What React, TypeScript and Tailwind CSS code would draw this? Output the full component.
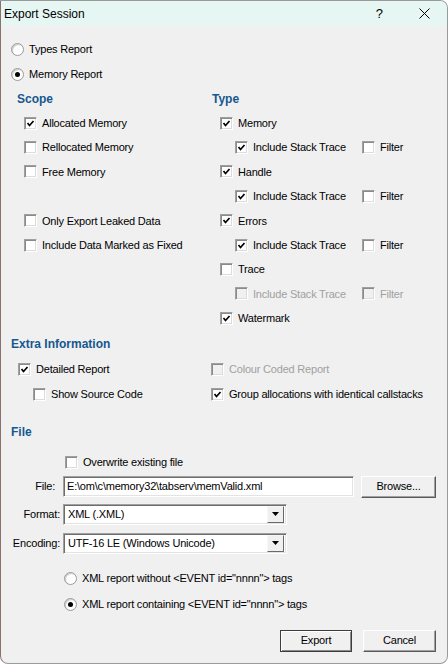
import React from 'react';

const font = "font-['Liberation_Sans',Arial,sans-serif] text-[11px] tracking-[-0.2px] text-black";

const Box: React.FC<{ checked?: boolean; disabled?: boolean }> = ({ checked, disabled }) => (
  <span
    className={`relative flex h-[13px] w-[13px] shrink-0 items-center justify-center border border-t-[#a0a0a0] border-l-[#a0a0a0] border-b-white border-r-white shadow-[inset_1px_1px_0_#8a8a8a,inset_-1px_-1px_0_#dcdcdc] ${
      disabled ? 'bg-[#f0f0f0]' : 'bg-white'
    }`}
  >
    {checked && (
      <svg width="9" height="9" viewBox="0 0 9 9">
        <polyline points="1.5,4 3.5,6.5 7.5,2" fill="none" stroke="#000" strokeWidth="1.7" />
      </svg>
    )}
  </span>
);

const Check: React.FC<{ label: string; checked?: boolean; disabled?: boolean; className?: string }> = ({
  label,
  checked,
  disabled,
  className = '',
}) => (
  <div className={`flex items-center gap-[5px] ${className}`}>
    <Box checked={checked} disabled={disabled} />
    <span className={`whitespace-nowrap ${disabled ? 'text-[#a0a0a0]' : 'text-black'}`}>{label}</span>
  </div>
);

const Radio: React.FC<{ label: string; on?: boolean }> = ({ label, on }) => (
  <div className="flex items-center gap-[5px]">
    <span className="flex h-[13px] w-[13px] items-center justify-center rounded-full border border-[#9a9a9a] bg-white shadow-[inset_1px_1px_1px_#c8c8c8]">
      {on && <span className="h-[5px] w-[5px] rounded-full bg-black" />}
    </span>
    <span className="whitespace-nowrap">{label}</span>
  </div>
);

const Heading: React.FC<{ children: React.ReactNode; className?: string }> = ({ children, className = '' }) => (
  <div className={`flex items-center text-[12px] font-bold tracking-normal text-[#15588f] ${className}`}>{children}</div>
);

const Row: React.FC<{ children?: React.ReactNode; className?: string }> = ({ children, className = '' }) => (
  <div className={`flex h-[24.4px] items-center ${className}`}>{children}</div>
);

const TraceRow: React.FC<{ disabled?: boolean; checked?: boolean }> = ({ disabled, checked }) => (
  <Row className="pl-[15px]">
    <Check label="Include Stack Trace" checked={checked} disabled={disabled} className="w-[127px]" />
    <Check label="Filter" disabled={disabled} />
  </Row>
);

const Sunken: React.FC<{ children: React.ReactNode; className?: string }> = ({ children, className = '' }) => (
  <div
    className={`flex items-center border border-t-[#a0a0a0] border-l-[#a0a0a0] border-b-white border-r-white bg-white shadow-[inset_1px_1px_0_#6e6e6e,inset_-1px_-1px_0_#e3e3e3] ${className}`}
  >
    {children}
  </div>
);

const Select: React.FC<{ value: string }> = ({ value }) => (
  <Sunken className="h-[21px] w-[224px] justify-between pl-[4px] pr-[2px]">
    <span className="whitespace-nowrap">{value}</span>
    <span className="flex h-[17px] w-[17px] items-center justify-center border border-t-[#f7f7f7] border-l-[#f7f7f7] border-b-[#6a6a6a] border-r-[#6a6a6a] bg-[#f0f0f0]">
      <svg width="7" height="4" viewBox="0 0 7 4">
        <polygon points="0,0 7,0 3.5,4" fill="#000" />
      </svg>
    </span>
  </Sunken>
);

const Button: React.FC<{ label: string; def?: boolean; className?: string }> = ({ label, def, className = '' }) => (
  <div
    className={`flex h-[22px] items-center justify-center border bg-[#f0f0f0] ${
      def
        ? 'border-[#3c3c3c] shadow-[inset_1px_1px_0_#fff,inset_-1px_-1px_0_#8a8a8a]'
        : 'border-t-white border-l-white border-b-[#5a5a5a] border-r-[#5a5a5a] shadow-[inset_-1px_-1px_0_#a0a0a0]'
    } ${className}`}
  >
    {label}
  </div>
);

export default function App() {
  return (
    <div
      className={`${font} flex h-[664px] w-[448px] flex-col overflow-hidden rounded-tr-[8px] rounded-br-[8px] rounded-bl-[8px] border border-[#9a9a9a] border-l-[#8c7070] bg-[#f0f0f0]`}
    >
      <div className="flex h-[25px] shrink-0 items-center bg-[#e6f6f2] pl-[3px] text-[12px] tracking-normal">
        <span className="flex-1">Export Session</span>
        <span className="mr-[36px] text-[13px]">?</span>
        <svg className="mr-[17px]" width="11" height="11" viewBox="0 0 11 11">
          <path d="M0.5 0.5 L10.5 10.5 M10.5 0.5 L0.5 10.5" stroke="#000" strokeWidth="1" />
        </svg>
      </div>

      <div className="flex flex-col pt-[11px]">
        <div className="pl-[10px]">
          <div className="flex h-[25px] items-center">
            <Radio label="Types Report" />
          </div>
          <div className="flex h-[25px] items-center">
            <Radio label="Memory Report" on />
          </div>
        </div>

        <div className="flex">
          <div className="w-[211px] shrink-0 pl-[16px]">
            <Heading className="h-[24px]">Scope</Heading>
            <div className="pl-[7px]">
              <Row><Check label="Allocated Memory" checked /></Row>
              <Row><Check label="Rellocated Memory" /></Row>
              <Row><Check label="Free Memory" /></Row>
              <Row />
              <Row><Check label="Only Export Leaked Data" /></Row>
              <Row><Check label="Include Data Marked as Fixed" /></Row>
            </div>
          </div>
          <div className="flex-1">
            <Heading className="h-[24px]">Type</Heading>
            <div className="pl-[8px]">
              <Row><Check label="Memory" checked /></Row>
              <TraceRow checked />
              <Row><Check label="Handle" checked /></Row>
              <TraceRow checked />
              <Row><Check label="Errors" checked /></Row>
              <TraceRow checked />
              <Row><Check label="Trace" /></Row>
              <TraceRow disabled />
              <Row><Check label="Watermark" checked /></Row>
            </div>
          </div>
        </div>

        <div className="pl-[10px]">
          <Heading className="h-[26px]">Extra Information</Heading>
          <div className="flex h-[25px] items-center">
            <Check label="Detailed Report" checked className="w-[200px] shrink-0 pl-[7px]" />
            <Check label="Colour Coded Report" disabled />
          </div>
          <div className="flex h-[25px] items-center">
            <Check label="Show Source Code" className="w-[200px] shrink-0 pl-[22px]" />
            <Check label="Group allocations with identical callstacks" checked />
          </div>
          <Heading className="mt-[13px] h-[24px]">File</Heading>
        </div>

        <div className="mt-[7px] flex h-[24px] items-center pl-[64px]">
          <Check label="Overwrite existing file" />
        </div>

        <div className="mt-[1px] flex items-start">
          <div className="flex h-[21px] w-[62px] items-center justify-end pr-[8px]">File:</div>
          <Sunken className="h-[21px] w-[291px] pl-[3px]">
            <span className="whitespace-nowrap">E:\om\c\memory32\tabserv\memValid.xml</span>
          </Sunken>
          <Button label="Browse..." className="ml-[7px] w-[75px]" />
        </div>

        <div className="mt-[6px] flex items-center">
          <div className="w-[62px] pr-[3px] text-right">Format:</div>
          <Select value="XML (.XML)" />
        </div>

        <div className="mt-[8px] flex items-center">
          <div className="w-[62px] pr-[3px] text-right">Encoding:</div>
          <Select value="UTF-16 LE (Windows Unicode)" />
        </div>

        <div className="mt-[12px] pl-[63px]">
          <div className="flex h-[26px] items-center">
            <Radio label={'XML report without <EVENT id="nnnn"> tags'} />
          </div>
          <div className="flex h-[26px] items-center">
            <Radio label={'XML report containing <EVENT id="nnnn"> tags'} on />
          </div>
        </div>

        <div className="mt-[12px] flex justify-end gap-[11px] pr-[11px]">
          <Button label="Export" def className="w-[72px]" />
          <Button label="Cancel" className="w-[73px]" />
        </div>
      </div>
    </div>
  );
}
